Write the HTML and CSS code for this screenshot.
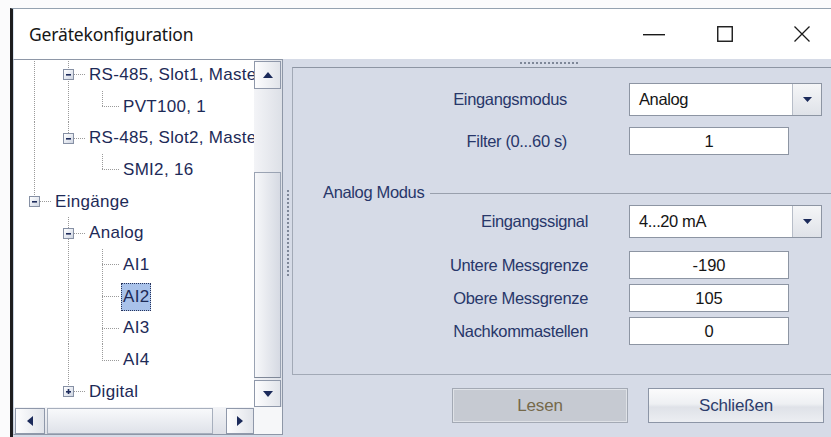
FILE: index.html
```html
<!DOCTYPE html>
<html lang="de">
<head>
<meta charset="utf-8">
<title>Gerätekonfiguration</title>
<link rel="stylesheet" href="styles.css">
</head>
<body>
<div class="screen">
  <div class="window">
    <header class="titlebar">
      <span class="title">Gerätekonfiguration</span>
      <div class="caption-buttons">
        <svg class="cap-min" width="22" height="16" viewBox="0 0 22 16"><rect x="0" y="7" width="22" height="1.4" fill="#1a1a1a"/></svg>
        <svg class="cap-max" width="16" height="16" viewBox="0 0 16 16"><rect x="0.75" y="0.75" width="14.5" height="14.5" fill="none" stroke="#1a1a1a" stroke-width="1.4"/></svg>
        <svg class="cap-close" width="16" height="16" viewBox="0 0 16 16"><path d="M0.5 0.5 L15.5 15.5 M15.5 0.5 L0.5 15.5" stroke="#1a1a1a" stroke-width="1.3" fill="none"/></svg>
      </div>
    </header>

    <div class="client">
      <div class="tree-pane">
        <div class="tree-main">
          <div class="tree-list">
            <div class="row">
              <span class="col vline"></span>
              <span class="col node-mid"><span class="box"><svg width="9" height="9" viewBox="0 0 9 9"><rect x="2" y="4" width="5" height="1.6" fill="#1e2c5c"/></svg></span></span>
              <span class="label">RS-485, Slot1, Master</span>
            </div>
            <div class="row">
              <span class="col vline"></span>
              <span class="col vline"></span>
              <span class="col elbow"></span>
              <span class="label">PVT100, 1</span>
            </div>
            <div class="row">
              <span class="col vline"></span>
              <span class="col node-last"><span class="box"><svg width="9" height="9" viewBox="0 0 9 9"><rect x="2" y="4" width="5" height="1.6" fill="#1e2c5c"/></svg></span></span>
              <span class="label">RS-485, Slot2, Master</span>
            </div>
            <div class="row">
              <span class="col vline"></span>
              <span class="col"></span>
              <span class="col elbow"></span>
              <span class="label">SMI2, 16</span>
            </div>
            <div class="row">
              <span class="col node-last"><span class="box"><svg width="9" height="9" viewBox="0 0 9 9"><rect x="2" y="4" width="5" height="1.6" fill="#1e2c5c"/></svg></span></span>
              <span class="label">Eingänge</span>
            </div>
            <div class="row">
              <span class="col"></span>
              <span class="col node-mid"><span class="box"><svg width="9" height="9" viewBox="0 0 9 9"><rect x="2" y="4" width="5" height="1.6" fill="#1e2c5c"/></svg></span></span>
              <span class="label">Analog</span>
            </div>
            <div class="row">
              <span class="col"></span>
              <span class="col vline"></span>
              <span class="col tee"></span>
              <span class="label">AI1</span>
            </div>
            <div class="row">
              <span class="col"></span>
              <span class="col vline"></span>
              <span class="col tee"></span>
              <span class="label selected">AI2</span>
            </div>
            <div class="row">
              <span class="col"></span>
              <span class="col vline"></span>
              <span class="col tee"></span>
              <span class="label">AI3</span>
            </div>
            <div class="row">
              <span class="col"></span>
              <span class="col vline"></span>
              <span class="col elbow"></span>
              <span class="label">AI4</span>
            </div>
            <div class="row">
              <span class="col"></span>
              <span class="col node-last"><span class="box"><svg width="9" height="9" viewBox="0 0 9 9"><rect x="2" y="4" width="5" height="1.6" fill="#1e2c5c"/><rect x="3.7" y="2" width="1.6" height="5" fill="#1e2c5c"/></svg></span></span>
              <span class="label">Digital</span>
            </div>
          </div>

          <div class="vscroll">
            <div class="sb-btn v-btn top-btn"><svg width="10" height="6" viewBox="0 0 10 6"><path d="M5 0 L10 6 L0 6 Z" fill="#1b2a5a"/></svg></div>
            <div class="sb-track v-track"></div>
            <div class="sb-thumb v-thumb"></div>
            <div class="sb-gap"></div>
            <div class="sb-btn v-btn"><svg width="10" height="6" viewBox="0 0 10 6"><path d="M0 0 L10 0 L5 6 Z" fill="#1b2a5a"/></svg></div>
          </div>
        </div>

        <div class="hscroll-row">
          <div class="hscroll">
            <div class="sb-btn h-btn left-btn"><svg width="6" height="10" viewBox="0 0 6 10"><path d="M6 0 L6 10 L0 5 Z" fill="#1b2a5a"/></svg></div>
            <div class="h-thumb"></div>
            <div class="h-track"></div>
            <div class="sb-btn h-btn"><svg width="6" height="10" viewBox="0 0 6 10"><path d="M0 0 L6 5 L0 10 Z" fill="#1b2a5a"/></svg></div>
          </div>
          <div class="sb-corner"></div>
        </div>
      </div>

      <div class="splitter"><span class="grip-v"></span></div>

      <div class="panel">
        <div class="grip-row"><span class="grip-h"></span></div>
        <div class="group">
          <div class="field r1">
            <span class="field-label short">Eingangsmodus</span>
            <div class="combo"><span class="combo-value">Analog</span><span class="combo-btn"><svg width="9" height="5" viewBox="0 0 9 5"><path d="M0 0 L9 0 L4.5 5 Z" fill="#1b2a5a"/></svg></span></div>
          </div>
          <div class="field r2">
            <span class="field-label short">Filter (0...60 s)</span>
            <div class="textbox">1</div>
          </div>
          <div class="subgroup-head">
            <span class="subgroup-title">Analog Modus</span>
            <span class="subgroup-line"></span>
          </div>
          <div class="field r3">
            <span class="field-label">Eingangssignal</span>
            <div class="combo"><span class="combo-value">4...20 mA</span><span class="combo-btn"><svg width="9" height="5" viewBox="0 0 9 5"><path d="M0 0 L9 0 L4.5 5 Z" fill="#1b2a5a"/></svg></span></div>
          </div>
          <div class="field r4">
            <span class="field-label">Untere Messgrenze</span>
            <div class="textbox">-190</div>
          </div>
          <div class="field r5">
            <span class="field-label">Obere Messgrenze</span>
            <div class="textbox">105</div>
          </div>
          <div class="field r5">
            <span class="field-label">Nachkommastellen</span>
            <div class="textbox">0</div>
          </div>
        </div>
        <div class="actions">
          <button class="btn btn-disabled" type="button">Lesen</button>
          <button class="btn" type="button">Schließen</button>
        </div>
      </div>
    </div>
  </div>
</div>
</body>
</html>
```

FILE: styles.css
```css
* { box-sizing: border-box; }

html, body {
  margin: 0;
  padding: 0;
  background: #ffffff;
  overflow: hidden;
}

.screen {
  width: 831px;
  height: 437px;
  padding-top: 8px;
  overflow: hidden;
  display: flex;
  flex-direction: column;
  background: #fbfbfc;
}

.window {
  flex: 1;
  margin-left: 10px;
  border-left: 3px solid #1d1d1f;
  border-top: 1px solid #95a2b0;
  display: flex;
  flex-direction: column;
  min-height: 0;
}

/* ---------- title bar ---------- */
.titlebar {
  height: 50px;
  flex: none;
  background: #ffffff;
  display: flex;
  align-items: center;
  padding-left: 15px;
  border-left: 1px solid #d9e4ef;
}

.title {
  font-family: "Noto Sans", "Open Sans", sans-serif;
  font-size: 17.5px;
  color: #161616;
  letter-spacing: -0.15px;
}

.caption-buttons {
  margin-left: auto;
  padding-right: 21px;
  display: flex;
  align-items: center;
}

.cap-min { margin-top: 1px; }
.cap-max { margin-left: 52px; }
.cap-close { margin-left: 61px; }

/* ---------- client area ---------- */
.client {
  flex: 1;
  min-height: 0;
  background: #d6dbe7;
  display: flex;
}

.tree-pane {
  width: 270px;
  flex: none;
  margin-bottom: 2px;
  border: 1px solid #8e97a7;
  border-left-color: #c7d2df;
  background: #ffffff;
  display: flex;
  flex-direction: column;
}

.tree-main {
  flex: 1;
  min-height: 0;
  display: flex;
}

.tree-list {
  flex: 1;
  overflow: hidden;
  padding-left: 3px;
  font-family: "Liberation Sans", Arial, sans-serif;
  font-size: 17px;
  letter-spacing: 0.3px;
  color: #1d2a57;
}

.row {
  height: 31.7px;
  display: flex;
  align-items: center;
  white-space: nowrap;
}

.row:first-child { margin-top: -1px; }

.col {
  width: 34px;
  height: 100%;
  flex: none;
  display: flex;
  align-items: center;
  justify-content: center;
  background-repeat: no-repeat;
}

/* dotted connector lines of the tree */
.vline {
  background-image: repeating-linear-gradient(to bottom, #9a9a9a 0 1px, transparent 1px 2px);
  background-position: 17px 0;
  background-size: 1px 100%;
}

.tee,
.node-mid {
  background-image:
    repeating-linear-gradient(to bottom, #9a9a9a 0 1px, transparent 1px 2px),
    repeating-linear-gradient(to right, #9a9a9a 0 1px, transparent 1px 2px);
  background-position: 17px 0, 17px 50%;
  background-size: 1px 100%, 17px 1px;
}

.elbow,
.node-last {
  background-image:
    repeating-linear-gradient(to bottom, #9a9a9a 0 1px, transparent 1px 2px),
    repeating-linear-gradient(to right, #9a9a9a 0 1px, transparent 1px 2px);
  background-position: 17px 0, 17px 50%;
  background-size: 1px 50%, 17px 1px;
}

.box {
  width: 11px;
  height: 11px;
  border: 1px solid #8690a4;
  background: linear-gradient(135deg, #ffffff 0%, #e3e7ef 60%, #cfd5e1 100%);
  display: flex;
  align-items: center;
  justify-content: center;
  margin-left: 1px;
}

.box svg { display: block; }

.label {
  margin-left: 2px;
  padding: 0 2px;
  height: 28px;
  line-height: 28px;
}

.label.selected {
  background: #a9c2ea;
  outline: 1px dotted #27335a;
  outline-offset: -1px;
}

/* ---------- scroll bars ---------- */
.vscroll {
  width: 28px;
  flex: none;
  display: flex;
  flex-direction: column;
  background: linear-gradient(to right, #f3f4f7, #dde0e7);
}

.sb-btn {
  border: 1px solid #8f98aa;
  background: linear-gradient(to right, #fdfdfe, #e1e4ea);
  display: flex;
  align-items: center;
  justify-content: center;
}

.v-btn {
  width: 27px;
  height: 27px;
  flex: none;
}

.top-btn {
  margin-top: 1px;
  height: 28px;
}

.v-track { flex: 1; }

.v-thumb {
  width: 27px;
  height: 206px;
  flex: none;
  border: 1px solid #9aa3b3;
  border-bottom-color: #7f8898;
  background: linear-gradient(to right, #f7f8fa, #d6dae3);
}

.sb-gap { height: 2px; flex: none; }

.hscroll-row {
  height: 27px;
  flex: none;
  display: flex;
}

.hscroll {
  width: 240px;
  display: flex;
  align-items: center;
  background: linear-gradient(to bottom, #f3f4f7, #dde0e7);
}

.h-btn {
  width: 28px;
  height: 26px;
  flex: none;
}

.left-btn {
  margin-left: 1px;
  width: 30px;
}

.h-thumb {
  margin-left: 2px;
  width: 166px;
  height: 26px;
  flex: none;
  border: 1px solid #a7afbd;
  background: linear-gradient(to bottom, #f8f9fb, #dfe2e9);
}

.h-track { flex: 1; height: 100%; }

.sb-corner {
  flex: 1;
  background: #f6f7f9;
}

/* ---------- splitter ---------- */
.splitter {
  width: 9px;
  flex: none;
  display: flex;
  justify-content: center;
  align-items: flex-start;
}

.grip-v {
  margin-top: 131px;
  width: 2px;
  height: 86px;
  background: repeating-linear-gradient(to bottom, #7e8798 0 2px, transparent 2px 4px);
}

/* ---------- settings panel ---------- */
.panel {
  flex: 1;
  display: flex;
  flex-direction: column;
  margin-right: -12px;
  font-family: "Liberation Sans", Arial, sans-serif;
}

.grip-row {
  height: 8px;
  flex: none;
}

.grip-h {
  display: block;
  margin: 3px 0 0 228px;
  width: 58px;
  height: 2px;
  background: repeating-linear-gradient(to right, #7e8798 0 2px, transparent 2px 4px);
}

.group {
  height: 308px;
  flex: none;
  border: 1px solid #a2a9b6;
  border-top-color: #8d95a3;
  display: flex;
  flex-direction: column;
}

.field {
  display: flex;
  align-items: center;
  flex: none;
}

.field-label {
  width: 295px;
  margin-right: 41px;
  text-align: right;
  font-size: 16.5px;
  color: #28376a;
  letter-spacing: -0.35px;
}

.field-label.short {
  width: 274px;
  margin-right: 62px;
}

.r1 { margin-top: 15px; }
.r2 { margin-top: 11px; }
.r3 { margin-top: 2px; }
.r4 { margin-top: 13px; }
.r5 { margin-top: 5px; }

.combo {
  width: 193px;
  height: 33px;
  border: 1px solid #8d95a3;
  background: #ffffff;
  display: flex;
}

.combo-value {
  flex: 1;
  padding-left: 9px;
  line-height: 31px;
  font-size: 16.5px;
  color: #151515;
  letter-spacing: -0.4px;
}

.combo-btn {
  width: 29px;
  border-left: 1px solid #b7bdc8;
  background: linear-gradient(to bottom, #f5f6f8, #dfe2e8);
  display: flex;
  align-items: center;
  justify-content: center;
}

.textbox {
  width: 160px;
  height: 28px;
  border: 1px solid #8d95a3;
  background: #ffffff;
  text-align: center;
  line-height: 26px;
  font-size: 16.5px;
  color: #151515;
}

.subgroup-head {
  margin-top: 26px;
  height: 22px;
  display: flex;
  align-items: center;
  padding-left: 30px;
}

.subgroup-title {
  font-size: 16.5px;
  color: #28376a;
  letter-spacing: -0.35px;
}

.subgroup-line {
  flex: 1;
  height: 1px;
  margin-left: 6px;
  margin-top: 2px;
  background: #99a0ad;
}

.actions {
  margin-top: 13px;
  padding-left: 160px;
  display: flex;
  gap: 20px;
}

.btn {
  width: 176px;
  height: 35px;
  border: 1px solid #8c95a6;
  background: linear-gradient(to bottom, #fbfbfc 0%, #eef0f3 45%, #dfe2e8 55%, #eceef2 100%);
  font-family: "Liberation Sans", Arial, sans-serif;
  font-size: 17px;
  letter-spacing: -0.2px;
  color: #2c3c6b;
  padding: 0;
}

.btn-disabled {
  background: #c6cad2;
  border-color: #a3a9b4;
  box-shadow: inset 0 0 0 1px #dfe2e7;
  color: #75694a;
}
```
